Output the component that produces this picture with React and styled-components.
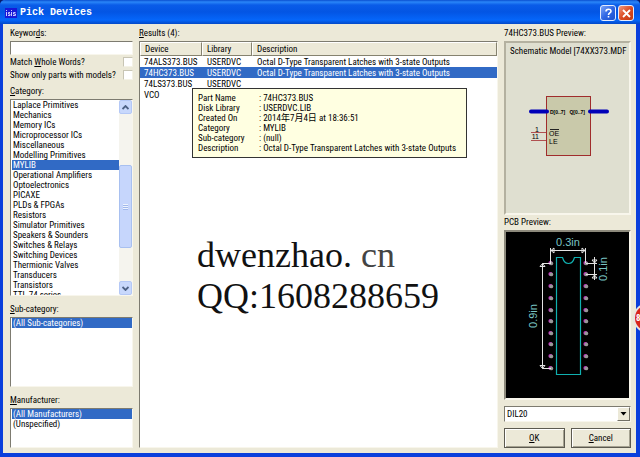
import { useState } from "react";
import styled, { createGlobalStyle } from "styled-components";

const categories = [
	"Laplace Primitives",
	"Mechanics",
	"Memory ICs",
	"Microprocessor ICs",
	"Miscellaneous",
	"Modelling Primitives",
	"MYLIB",
	"Operational Amplifiers",
	"Optoelectronics",
	"PICAXE",
	"PLDs & FPGAs",
	"Resistors",
	"Simulator Primitives",
	"Speakers & Sounders",
	"Switches & Relays",
	"Switching Devices",
	"Thermionic Valves",
	"Transducers",
	"Transistors",
	"TTL 74 series",
];

const devices = [
	{ name: "74ALS373.BUS", library: "USERDVC", text: "Octal D-Type Transparent Latches with 3-state Outputs" },
	{ name: "74HC373.BUS", library: "USERDVC", text: "Octal D-Type Transparent Latches with 3-state Outputs" },
	{ name: "74LS373.BUS", library: "USERDVC", text: "" },
	{ name: "VCO", library: "", text: "" },
];

const details = [
	["Part Name", "74HC373.BUS"],
	["Disk Library", "USERDVC.LIB"],
	["Created On", "2014年7月4日 at 18:36:51"],
	["Category", "MYLIB"],
	["Sub-category", "(null)"],
	["Description", "Octal D-Type Transparent Latches with 3-state Outputs"],
];

const pins = [31, 42, 54, 66, 78, 89, 101, 112, 124, 136];

const ListBox = ({ id, items, initial, scroll, rows }) => {
	const [selected, setSelected] = useState(initial);

	return (
		<StyledSunken $rows={rows}>
			<StyledList role="listbox" aria-labelledby={id} tabIndex={0}>
				{items.map((item) => (
					<StyledItem
						key={item}
						role="option"
						aria-selected={item === selected}
						$selected={item === selected}
						onClick={() => setSelected(item)}
					>
						{item}
					</StyledItem>
				))}
			</StyledList>
			{scroll && (
				<StyledScroll>
					<StyledArrow type="button" aria-label="Scroll up">
						<svg width="7" height="5" viewBox="0 0 7 5">
							<path d="M0.5 4L3.5 1L6.5 4" fill="none" stroke="#4d6185" strokeWidth="1.8" />
						</svg>
					</StyledArrow>
					<StyledTrack>
						<StyledThumb />
					</StyledTrack>
					<StyledArrow type="button" aria-label="Scroll down">
						<svg width="7" height="5" viewBox="0 0 7 5">
							<path d="M0.5 1L3.5 4L6.5 1" fill="none" stroke="#4d6185" strokeWidth="1.8" />
						</svg>
					</StyledArrow>
				</StyledScroll>
			)}
		</StyledSunken>
	);
};

const Schematic = () => (
	<StyledDrawing viewBox="0 0 123 110" preserveAspectRatio="xMidYMin meet" role="img" aria-label="Schematic symbol">
		<rect x="40.5" y="38.5" width="44" height="59" fill="#c9c9aa" stroke="#a02c2c" />
		<path d="M25 53.5H41M84 53.5H101" stroke="#0000b8" strokeWidth="4" strokeLinecap="round" />
		<path d="M25 74.5H40M25 82.5H40" stroke="#b05050" />
		<path d="M44 71.5H53" stroke="#222" />
		<g fontFamily="Liberation Sans, sans-serif" fontSize="7" fill="#000">
			<text x="44" y="56" fontSize="5" fontWeight="bold">D[0..7]</text>
			<text x="79" y="56" fontSize="5" fontWeight="bold" textAnchor="end">Q[0..7]</text>
			<text x="43" y="78">OE</text>
			<text x="43" y="86">LE</text>
			<text x="33" y="74" textAnchor="end">1</text>
			<text x="33" y="81" textAnchor="end">11</text>
		</g>
	</StyledDrawing>
);

const Footprint = () => (
	<StyledDrawing viewBox="0 0 123 166" preserveAspectRatio="xMidYMin meet" role="img" aria-label="DIL20 footprint">
		<path
			d="M50.5 25.5H56.5C57.5 29 60 31.5 62.5 31.5S67.5 29 68.5 25.5H74.5V142.5H50.5Z"
			fill="none"
			stroke="#10b0b0"
			strokeWidth="1.2"
		/>
		{pins.map((y) => (
			<g key={y}>
				<circle cx="44.5" cy={y} r="2.1" fill="#c030c0" />
				<circle cx="45.3" cy={y + 0.4} r="1.9" fill="#989898" />
				<circle cx="79.5" cy={y} r="2.1" fill="#c030c0" />
				<circle cx="80.3" cy={y + 0.4} r="1.9" fill="#989898" />
			</g>
		))}
		<g fill="none" stroke="#e4e4e4">
			<path d="M44.5 31V16M79.5 31V16M45 18.5H79M48 16L45 18.5L48 21ZM76 16L79 18.5L76 21Z" />
			<path d="M45 31.5H36.5V136.5H45M34 34.5H39L36.5 31.5ZM34 133.5H39L36.5 136.5Z" />
			<path d="M80 31.5H91M80 42.5H91M88.5 25V48M86 28H91L88.5 31ZM86 46H91L88.5 43Z" />
		</g>
		<g fontFamily="Liberation Sans, sans-serif" fontSize="11" fill="#79c4c4" textAnchor="middle">
			<text x="62" y="14">0.3in</text>
			<text transform="translate(31 84) rotate(-90)">0.9in</text>
			<text transform="translate(101 37) rotate(-90)">0.1in</text>
		</g>
	</StyledDrawing>
);

const App = () => {
	const [current, setCurrent] = useState("74HC373.BUS");

	return (
		<StyledScreen>
			<GlobalStyle />
			<StyledDialog>
				<StyledTitleBar>
					<StyledLogo width="12" height="10" viewBox="0 0 12 10" aria-hidden="true">
						<rect width="12" height="10" fill="#1818d8" />
						<path
							d="M1.5 4V8M1.5 2V3M5 4.5H3.5V6H5V7.5H3M6.5 4V8M6.5 2V3M10.5 4.5H8.5V6H10.5V7.5H8"
							fill="none"
							stroke="#c8c8ff"
						/>
					</StyledLogo>
					<StyledTitle>Pick Devices</StyledTitle>
					<StyledCaption type="button" aria-label="Help">
						<svg width="9" height="10" viewBox="0 0 9 10">
							<path
								d="M2 3.5C2 0.5 7 0.5 7 3.2C7 5 4.5 4.8 4.5 7M4.5 8V9.6"
								fill="none"
								stroke="#fff"
								strokeWidth="1.6"
							/>
						</svg>
					</StyledCaption>
					<StyledCaption type="button" aria-label="Close" $close>
						<svg width="9" height="9" viewBox="0 0 9 9">
							<path d="M1 1L8 8M8 1L1 8" stroke="#fff" strokeWidth="1.8" />
						</svg>
					</StyledCaption>
				</StyledTitleBar>
				<StyledBody>
					<StyledColumn>
						<StyledSearch>
							<StyledLabel as="label" htmlFor="keywords">
								Keywor<u>d</u>s:
							</StyledLabel>
							<StyledInput id="keywords" type="text" />
							<StyledCheckRow>
								<span>
									Match <u>W</u>hole Words?
								</span>
								<StyledCheck type="checkbox" />
							</StyledCheckRow>
							<StyledCheckRow>
								<span>Show only parts with models?</span>
								<StyledCheck type="checkbox" />
							</StyledCheckRow>
						</StyledSearch>
						<StyledSection $grow>
							<StyledLabel id="category">
								<u>C</u>ategory:
							</StyledLabel>
							<ListBox id="category" items={categories} initial="MYLIB" scroll />
						</StyledSection>
						<StyledSection $gap>
							<StyledLabel id="subcategory">
								<u>S</u>ub-category:
							</StyledLabel>
							<ListBox id="subcategory" items={["(All Sub-categories)"]} initial="(All Sub-categories)" rows={7} />
						</StyledSection>
						<StyledSection $gap>
							<StyledLabel id="manufacturer">
								<u>M</u>anufacturer:
							</StyledLabel>
							<ListBox
								id="manufacturer"
								items={["(All Manufacturers)", "(Unspecified)"]}
								initial="(All Manufacturers)"
								rows={4}
							/>
						</StyledSection>
					</StyledColumn>

					<StyledColumn>
						<StyledLabel>
							<u>R</u>esults (4):
						</StyledLabel>
						<StyledResults>
							<StyledTable>
								<colgroup>
									<col width="62" />
									<col width="50" />
									<col />
								</colgroup>
								<thead>
									<tr>
										<th>Device</th>
										<th>Library</th>
										<th>Description</th>
									</tr>
								</thead>
								<tbody>
									{devices.map((device) => (
										<StyledRow
											key={device.name}
											$selected={device.name === current}
											onClick={() => setCurrent(device.name)}
										>
											<td>{device.name}</td>
											<td>{device.library}</td>
											<td>{device.text}</td>
										</StyledRow>
									))}
								</tbody>
							</StyledTable>
							<StyledTooltip role="tooltip">
								{details.map(([name, value]) => (
									<div key={name}>
										<dt>{name}</dt>
										<dd>: {value}</dd>
									</div>
								))}
							</StyledTooltip>
							<StyledWatermark>
								dwenzhao. <span>cn</span>
								<br />
								QQ:1608288659
							</StyledWatermark>
						</StyledResults>
					</StyledColumn>

					<StyledColumn>
						<StyledSection $grow>
							<StyledLabel>74HC373.BUS Preview:</StyledLabel>
							<StyledPreview>
								<StyledModel>Schematic Model [74XX373.MDF</StyledModel>
								<Schematic />
							</StyledPreview>
						</StyledSection>
						<StyledSection>
							<StyledLabel>PCB Preview:</StyledLabel>
							<StyledPreview $dark>
								<Footprint />
							</StyledPreview>
						</StyledSection>
						<StyledSelectBox>
							<StyledSelect aria-label="Package" defaultValue="DIL20">
								<option>DIL20</option>
							</StyledSelect>
							<StyledDrop aria-hidden="true">
								<svg width="7" height="4" viewBox="0 0 7 4">
									<path d="M0.5 0H6.5L3.5 3.5Z" />
								</svg>
							</StyledDrop>
						</StyledSelectBox>
						<StyledButtons>
							<StyledButton type="button">
								<u>O</u>K
							</StyledButton>
							<StyledButton type="button">
								<u>C</u>ancel
							</StyledButton>
						</StyledButtons>
					</StyledColumn>
				</StyledBody>
			</StyledDialog>
			<StyledBadge>8</StyledBadge>
		</StyledScreen>
	);
};
export default App;

const GlobalStyle = createGlobalStyle`
	* {
		box-sizing: border-box;
	}
	body {
		margin: 0;
		background: #0a1c6a;
	}
	body, button, input, select {
		font-family: "Roboto Condensed", Roboto, "Noto Sans CJK SC", sans-serif;
		font-size: 9px;
		line-height: 10px;
		color: #000;
	}
`;
const StyledScreen = styled.div`
	position: relative;
	overflow: hidden;
`;
const StyledDialog = styled.main`
	display: flex;
	flex-direction: column;
	height: 100vh;
	background: #ece9d8;
	border: solid #0a3fdc;
	border-width: 0 4px 4px 3px;
	border-radius: 5px 5px 0 0;
`;
const StyledTitleBar = styled.header`
	display: flex;
	align-items: center;
	gap: 2px;
	height: 24px;
	flex: none;
	margin: 0 -4px 0 -3px;
	padding: 2px 6px 0 5px;
	background: linear-gradient(#0a4fd0 0, #2a86f8 2px, #0a5ce8 5px, #0355e4 12px, #0566fa 20px, #0348c8 24px);
	border-radius: 5px 5px 0 0;
`;
const StyledLogo = styled.svg`
	flex: none;
`;
const StyledTitle = styled.h1`
	flex: 1;
	margin: 0;
	padding-left: 1px;
	font-family: "Liberation Mono", monospace;
	font-size: 10px;
	line-height: 12px;
	color: #fff;
`;
const StyledCaption = styled.button`
	display: flex;
	align-items: center;
	justify-content: center;
	width: 16px;
	height: 16px;
	padding: 0;
	border: 1px solid #e4ecff;
	border-radius: 3px;
	background: ${(props) =>
		props.$close
			? "linear-gradient(135deg, #f09a80, #dc4c24 50%, #c03810)"
			: "linear-gradient(135deg, #7ea6f8, #2f66e4 50%, #1c50d0)"};
`;
const StyledBody = styled.div`
	display: grid;
	grid-template-columns: 123px minmax(0, 1fr) 127px;
	grid-template-rows: minmax(0, 1fr);
	gap: 6px;
	flex: 1;
	min-height: 0;
	padding: 2px 5px 5px 7px;
`;
const StyledColumn = styled.div`
	display: flex;
	flex-direction: column;
	min-width: 0;
	min-height: 0;
`;
const StyledSearch = styled.div`
	padding-bottom: 3px;
`;
const StyledSection = styled.section`
	display: flex;
	flex-direction: column;
	flex: ${(props) => (props.$grow ? "1" : "none")};
	min-height: 0;
	padding-top: ${(props) => (props.$gap ? "6px" : "0")};
`;
const StyledLabel = styled.div`
	display: block;
	flex: none;
	padding-bottom: 1px;
	line-height: 14px;
	white-space: nowrap;
`;
const StyledInput = styled.input`
	display: block;
	width: 100%;
	height: 14px;
	padding: 0 3px;
	border: 1px solid;
	border-color: #7d7b70 #f8f6ec #f8f6ec #7d7b70;
	background: #fff;
`;
const StyledCheckRow = styled.label`
	display: flex;
	align-items: center;
	justify-content: space-between;
	height: 13px;
	white-space: nowrap;
`;
const StyledCheck = styled.input`
	appearance: none;
	flex: none;
	width: 10px;
	height: 10px;
	margin: 0;
	background: #fff;
	border: 1px solid;
	border-color: #c8c5b4 #f4f2e6 #f4f2e6 #c8c5b4;
`;
const StyledSunken = styled.div`
	display: flex;
	flex: ${(props) => (props.$rows ? "none" : "1")};
	height: ${(props) => (props.$rows ? props.$rows * 10 + "px" : "auto")};
	min-height: 0;
	overflow: hidden;
	background: #fff;
	border: 1px solid;
	border-color: #7d7b70 #f8f6ec #f8f6ec #7d7b70;
`;
const StyledList = styled.ul`
	flex: 1;
	min-width: 0;
	margin: 0;
	padding: 0 0 0 1px;
	list-style: none;
	overflow: hidden;
	outline: none;
`;
const StyledItem = styled.li`
	padding-left: 1px;
	line-height: 10px;
	white-space: nowrap;
	color: ${(props) => (props.$selected ? "#fff" : "#000")};
	background: ${(props) => (props.$selected ? "#316ac5" : "transparent")};
`;
const StyledScroll = styled.div`
	display: flex;
	flex-direction: column;
	width: 13px;
	background: #f5f4ee;
`;
const StyledArrow = styled.button`
	display: flex;
	align-items: center;
	justify-content: center;
	height: 14px;
	flex: none;
	padding: 0;
	border: 1px solid #b4c8f6;
	border-radius: 2px;
	background: #c8d8fc;
`;
const StyledTrack = styled.div`
	display: grid;
	grid-template-rows: 51fr 83fr 33fr;
	flex: 1;
`;
const StyledThumb = styled.div`
	grid-row: 2;
	border: 1px solid #a8c0f0;
	border-radius: 2px;
	background: repeating-linear-gradient(#eef4fe 0 1px, #a0b8ec 1px 2px) center / 5px 6px no-repeat, #c6d6fc;
`;
const StyledResults = styled.div`
	position: relative;
	flex: 1;
	min-height: 0;
	background: #fff;
	border: 1px solid;
	border-color: #7d7b70 #f8f6ec #f8f6ec #7d7b70;
`;
const StyledTable = styled.table`
	width: 100%;
	table-layout: fixed;
	border-collapse: separate;
	border-spacing: 0;

	th {
		height: 14px;
		padding: 0 4px;
		font-weight: normal;
		text-align: left;
		background: #ece9d8;
		border: 1px solid;
		border-color: #fff #85826f #85826f #fff;
	}
	td {
		height: 11px;
		padding: 0 0 0 5px;
		white-space: nowrap;
	}
	td:first-child {
		padding-left: 4px;
	}
`;
const StyledRow = styled.tr`
	color: ${(props) => (props.$selected ? "#fff" : "#000")};
	background: ${(props) => (props.$selected ? "#316ac5" : "transparent")};
`;
const StyledTooltip = styled.dl`
	position: absolute;
	top: 46px;
	left: 52px;
	width: 275px;
	margin: 0;
	padding: 4px 5px;
	background: #ffffe1;
	border: 1px solid #333;

	div {
		display: flex;
		height: 10px;
	}
	dt {
		flex: none;
		width: 61px;
	}
	dd {
		margin: 0;
		white-space: nowrap;
	}
`;
const StyledWatermark = styled.p`
	position: absolute;
	top: 193px;
	left: 57px;
	margin: 0;
	font-family: "Liberation Serif", serif;
	font-size: 36px;
	line-height: 41px;
	color: #111;
	white-space: nowrap;

	span {
		color: #444;
	}
`;
const StyledPreview = styled.div`
	display: flex;
	flex-direction: column;
	flex: 1;
	min-height: 0;
	overflow: hidden;
	background: ${(props) => (props.$dark ? "#000" : "#dfdfd0")};
	border: 2px solid;
	border-color: ${(props) =>
		props.$dark ? "#8d8a7c #f8f6ec #f8f6ec #8d8a7c" : "#b4b1a0 #f8f6ec #f8f6ec #b4b1a0"};
`;
const StyledModel = styled.span`
	padding: 2px 0 1px 4px;
	line-height: 12px;
	white-space: nowrap;
`;
const StyledDrawing = styled.svg`
	display: block;
	width: 100%;
`;
const StyledSelectBox = styled.div`
	display: flex;
	flex: none;
	height: 16px;
	margin: 6px 0;
	background: #fff;
	border: 1px solid;
	border-color: #7d7b70 #f8f6ec #f8f6ec #7d7b70;
`;
const StyledSelect = styled.select`
	appearance: none;
	flex: 1;
	min-width: 0;
	padding: 0 2px;
	border: 0;
	background: transparent;
`;
const StyledDrop = styled.span`
	display: flex;
	align-items: center;
	justify-content: center;
	width: 13px;
	background: #ece9d8;
	border: 1px solid;
	border-color: #fff #716f64 #716f64 #fff;
	pointer-events: none;
`;
const StyledButtons = styled.div`
	display: grid;
	grid-template-columns: 1fr 1fr;
	gap: 6px;
	flex: none;
`;
const StyledButton = styled.button`
	height: 20px;
	padding: 0;
	background: #ece9d8;
	border: 1px solid #5c5a50;
	box-shadow: inset 1px 1px #fff, inset -1px -1px #a5a291;
`;
const StyledBadge = styled.span`
	position: absolute;
	top: 303px;
	right: -23px;
	width: 30px;
	height: 30px;
	padding-left: 1px;
	font-weight: bold;
	line-height: 26px;
	color: #fff;
	background: #d8261c;
	border: 2px solid #e8e4e0;
	border-radius: 50%;
`;
